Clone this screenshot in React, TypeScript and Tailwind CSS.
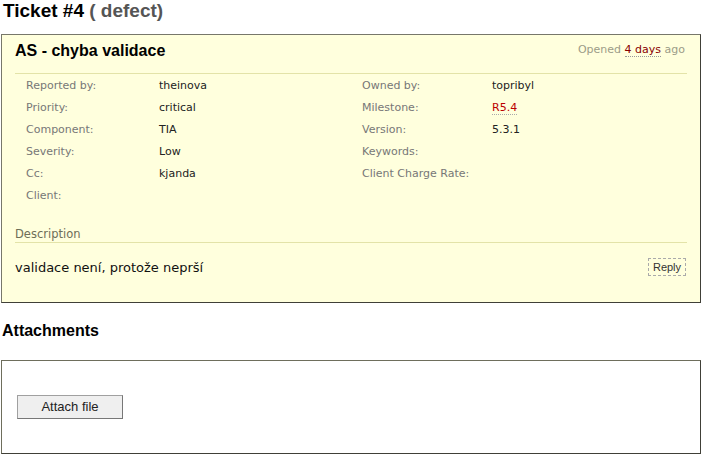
import React from "react";

const verd = { fontFamily: '"DejaVu Sans", Verdana, sans-serif' };
const arial = { fontFamily: '"Liberation Sans", Arial, sans-serif' };

function Row({ l1, v1, l2, v2 }: { l1: string; v1?: React.ReactNode; l2?: string; v2?: React.ReactNode }) {
  return (
    <div className="grid grid-cols-[133px_203px_130px_1fr] h-[22px] leading-[22px] text-[11px]">
      <div className="text-[#777]">{l1}</div>
      <div className="text-[#222]">{v1}</div>
      <div className="text-[#777]">{l2}</div>
      <div className="text-[#222]">{v2}</div>
    </div>
  );
}

export default function App() {
  return (
    <div className="w-[708px] h-[461px] bg-white pl-[1px] pr-[7px]" style={verd}>
      <h1 className="h-[22px] leading-[22px] text-[19px] font-bold pl-[2px] text-black" style={arial}>
        Ticket #4 <span className="text-[#555]">( defect)</span>
      </h1>

      <div className="mt-[12px] bg-[#ffffdd] border border-t-[#77776a] border-l-[#77776a] border-r-[#404038] border-b-[#404038] pt-[7px] pl-[13px] pr-[13px] pb-[24px]">
        <div className="flex items-start justify-between">
          <h2 className="h-[18px] leading-[18px] text-[16px] font-bold text-black" style={arial}>
            AS - chyba validace
          </h2>
          <div className="mt-[1px] h-[14px] leading-[14px] text-[11px] text-[#9c9c88] pr-[2px]">
            Opened{" "}
            <span className="text-[#800] border-b border-dotted border-[#999]">4 days</span>{" "}
            ago
          </div>
        </div>

        <div className="mt-[13px] border-t border-[#e3e3a8] pt-[1px] pl-[11px]">
          <Row l1="Reported by:" v1="theinova" l2="Owned by:" v2="topribyl" />
          <Row
            l1="Priority:"
            v1="critical"
            l2="Milestone:"
            v2={<span className="text-[#bb0000] border-b border-dotted border-[#aaa]">R5.4</span>}
          />
          <Row l1="Component:" v1="TIA" l2="Version:" v2="5.3.1" />
          <Row l1="Severity:" v1="Low" l2="Keywords:" />
          <Row l1="Cc:" v1="kjanda" l2="Client Charge Rate:" />
          <Row l1="Client:" />
        </div>

        <div className="mt-[20px] h-[14px] leading-[14px] text-[11.5px] text-[#6e6e58] box-content pb-[1px] border-b border-[#e3e3a8]">
          Description
        </div>

        <div className="mt-[15px] flex items-start justify-between">
          <div className="h-[20px] leading-[20px] text-[13px] text-[#111]">validace není, protože neprší</div>
          <div
            className="w-[38px] h-[18px] border border-dashed border-[#aaa] text-[11px] leading-[17px] text-center text-[#333] mr-[1px]"
            style={arial}
          >
            Reply
          </div>
        </div>
      </div>

      <h2 className="mt-[19px] h-[18px] leading-[18px] text-[16px] font-bold text-black pl-[1px]" style={arial}>
        Attachments
      </h2>

      <div className="mt-[20px] h-[94px] border border-t-[#6e6e5c] border-l-[#6e6e5c] border-r-[#404038] border-b-[#404038] pt-[34px] pl-[15px]">
        <div
          className="w-[106px] h-[24px] bg-[#efefef] border border-[#a0a0a0] border-b-[#777] border-r-[#777] text-[13px] leading-[22px] text-center text-[#222]"
          style={arial}
        >
          Attach file
        </div>
      </div>
    </div>
  );
}
